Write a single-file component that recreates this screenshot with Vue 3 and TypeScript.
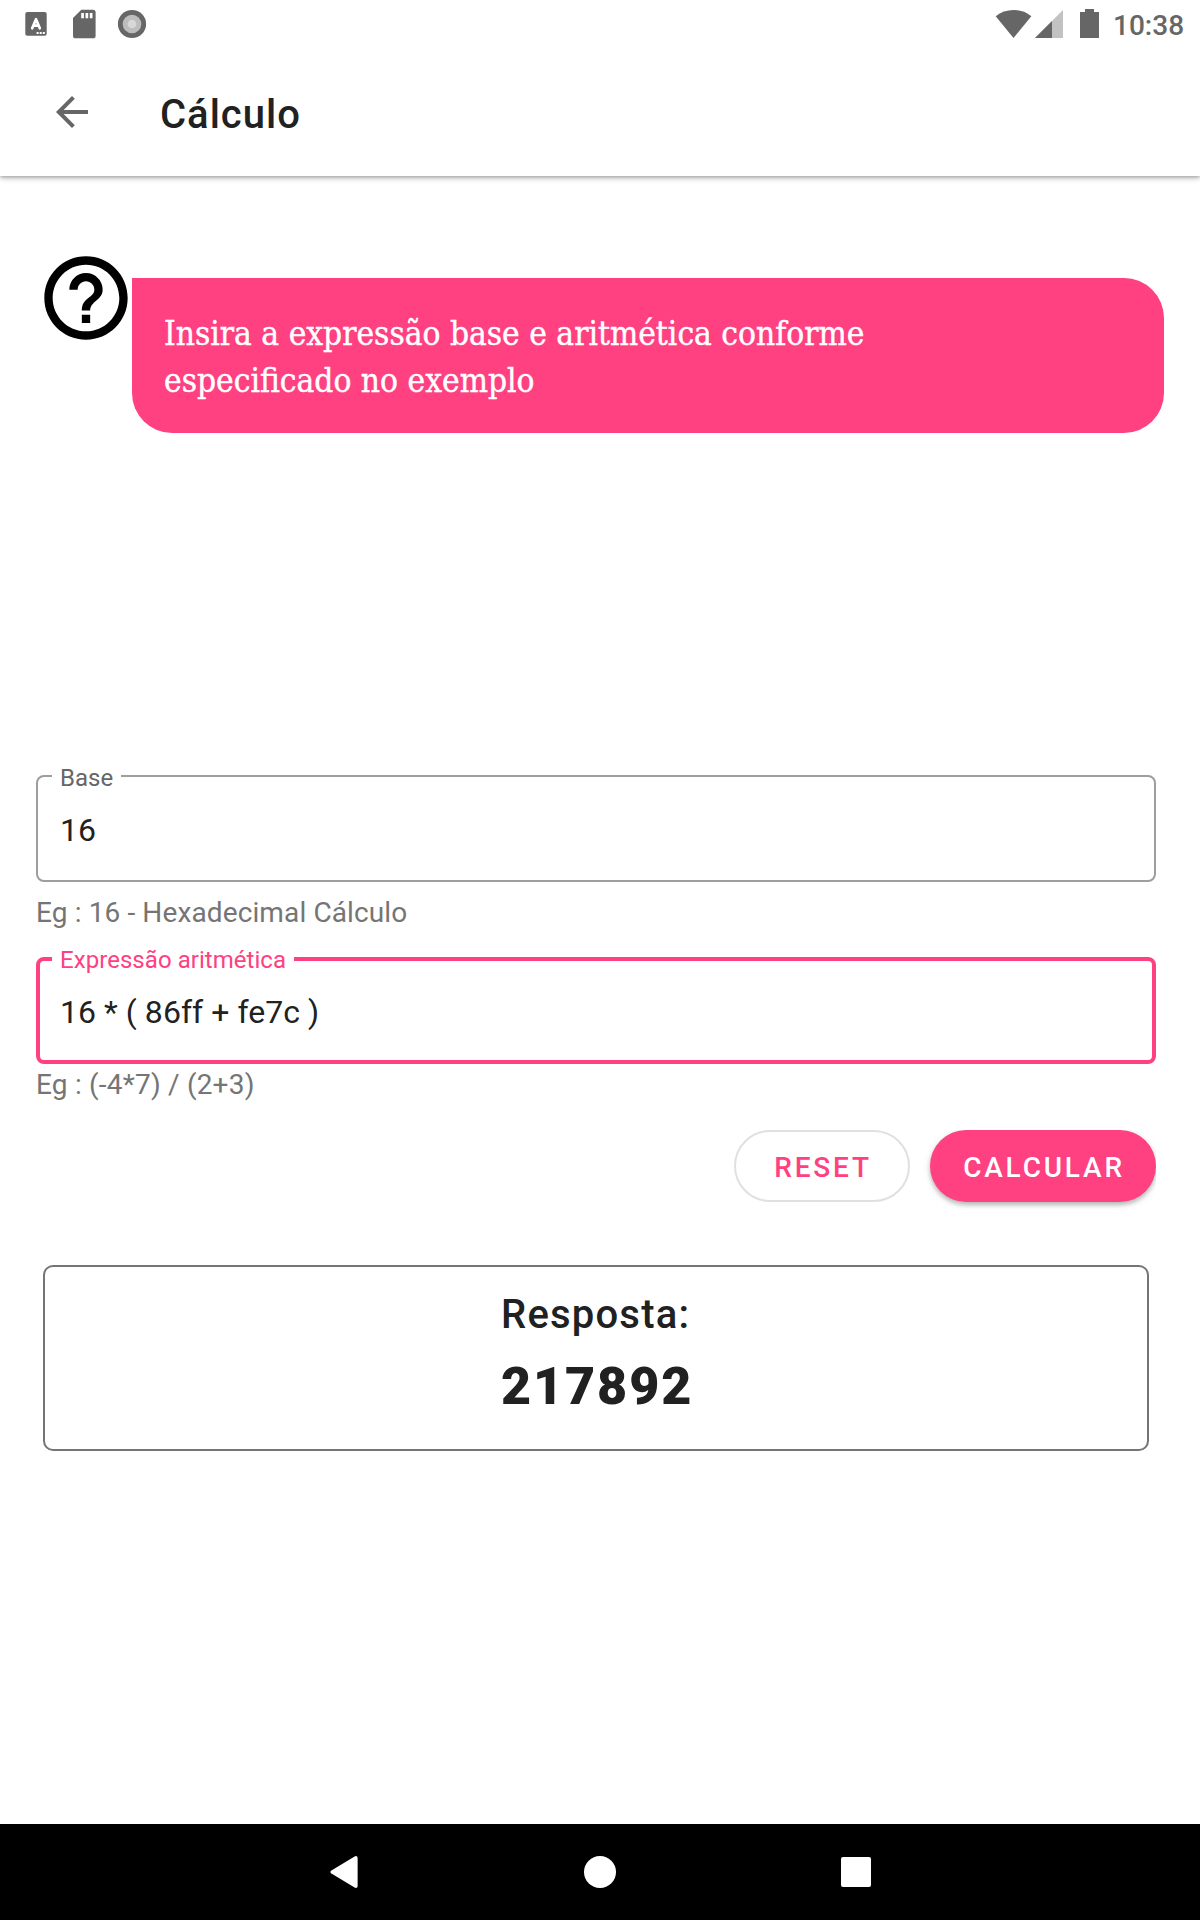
<script setup lang="ts">
interface Field {
  id: string
  label: string
  value: string
  hint: string
  focused: boolean
}

const fields: Field[] = [
  { id: 'base', label: 'Base', value: '16', hint: 'Eg : 16 - Hexadecimal Cálculo', focused: false },
  { id: 'expr', label: 'Expressão aritmética', value: '16 * ( 86ff + fe7c )', hint: 'Eg : (-4*7) / (2+3)', focused: true },
]
const tipLines: string[] = ['Insira a expressão base e aritmética conforme', 'especificado no exemplo']
const result = '217892'
</script>

<template>
  <div class="screen">
    <header class="top">
      <div class="status">
        <svg class="status-left" width="160" height="48" viewBox="0 0 160 48">
          <rect x="25.3" y="12" width="21.4" height="23.8" rx="2" fill="#666" />
          <path d="M32.2 28.3L36 19.2L39.8 28.3M33.6 25.6H38.4" fill="none" stroke="#fff" stroke-width="2.7" stroke-linecap="round" stroke-linejoin="round" />
          <path d="M36.6 32h2v2h-2zM39.7 32h2v2h-2zM42.8 32h2v2h-2z" fill="#fff" />
          <path d="M81.3 9.7H93a2.6 2.6 0 0 1 2.6 2.6V35.7a2.6 2.6 0 0 1-2.6 2.6H75.6A2.6 2.6 0 0 1 73 35.7V18z" fill="#666" />
          <path d="M81.2 13h2.7v5.3h-2.7zM85.5 13h2.7v5.3h-2.7zM89.8 13h2.7v5.3h-2.7z" fill="#fff" />
          <circle cx="132" cy="24" r="14.1" fill="#666" />
          <circle cx="132" cy="24" r="9.3" fill="#bdbdbd" />
          <circle cx="132" cy="24" r="4.3" fill="#d8d8d8" />
        </svg>
        <div class="status-right">
          <svg width="110" height="48" viewBox="992 0 110 48">
            <path d="M995.7 16.2Q1003.5 10 1013.5 10T1031.3 16.2L1013.5 38z" fill="#666" />
            <path d="M1063 10V38H1035z" fill="#c2c2c2" />
            <path d="M1052 21V38H1035z" fill="#666" />
            <path d="M1085 9h9v3h5v26h-19V12h5z" fill="#666" />
          </svg>
          <span class="clock">10:38</span>
        </div>
      </div>
      <div class="appbar">
        <svg class="back" width="48" height="48" viewBox="0 0 24 24">
          <path d="M20 11H7.83l5.59-5.59L12 4l-8 8 8 8 1.41-1.41L7.83 13H20v-2z" fill="#666" />
        </svg>
        <h1>Cálculo</h1>
      </div>
    </header>

    <main>
      <section class="tip">
        <svg class="help" width="100" height="100" viewBox="0 0 24 24">
          <path d="M11 18h2v-2h-2v2zm1-16C6.48 2 2 6.48 2 12s4.48 10 10 10 10-4.48 10-10S17.52 2 12 2zm0 18c-4.41 0-8-3.59-8-8s3.59-8 8-8 8 3.59 8 8-3.59 8-8 8zm0-14c-2.21 0-4 1.79-4 4h2c0-1.1.9-2 2-2s2 .9 2 2c0 2-3 1.75-3 5h2c0-2.25 3-2.5 3-5 0-2.21-1.79-4-4-4z" />
        </svg>
        <div class="bubble">
          <p v-for="line in tipLines" :key="line">{{ line }}</p>
        </div>
      </section>

      <section class="form">
        <div v-for="f in fields" :key="f.id" class="group" :class="{ focused: f.focused }">
          <div class="field">
            <span class="label">{{ f.label }}</span>
            <span class="value">{{ f.value }}</span>
          </div>
          <p class="hint">{{ f.hint }}</p>
        </div>
        <div class="actions">
          <button class="btn outline">RESET</button>
          <button class="btn solid">CALCULAR</button>
        </div>
      </section>

      <section class="result">
        <div class="answer">
          <span class="caption">Resposta:</span>
          <span class="number">{{ result }}</span>
        </div>
      </section>
    </main>

    <nav class="navbar">
      <svg width="32" height="32" viewBox="0 0 32 32"><path d="M3.4 14.5L26.6 .4Q29.6 -.6 29.6 2V30Q29.6 32.6 26.6 31.6L3.4 17.5Q1.4 16 3.4 14.5z" fill="#fff" /></svg>
      <svg width="32" height="32" viewBox="0 0 32 32"><circle cx="16" cy="16" r="16" fill="#fff" /></svg>
      <svg width="32" height="32" viewBox="0 0 32 32"><rect x="1" y="1" width="30" height="30" rx="2" fill="#fff" /></svg>
    </nav>
  </div>
</template>

<style>
body {
  margin: 0;
  background: #fff;
}
</style>

<style scoped>
.screen {
  width: 1200px;
  height: 1920px;
  display: flex;
  flex-direction: column;
  background: #fff;
  color: #212121;
  font-family: Roboto, sans-serif;
  overflow: hidden;
}
p,
h1 {
  margin: 0;
}
svg {
  display: block;
  flex: none;
}
.top {
  height: 176px;
  flex: none;
  box-shadow: 0 2px 6px rgba(0, 0, 0, 0.26), 0 1px 3px rgba(0, 0, 0, 0.2);
}
.status {
  height: 48px;
  display: flex;
  justify-content: space-between;
}
.status-right {
  display: flex;
  padding-right: 15px;
}
.clock {
  width: 72px;
  margin-left: 11px;
  line-height: 51px;
  font-size: 28px;
  font-weight: 500;
  color: #666;
  white-space: nowrap;
}
.appbar {
  height: 128px;
  display: flex;
  align-items: flex-start;
  padding-left: 48px;
}
.back {
  margin-top: 40px;
}
h1 {
  margin-left: 64px;
  font-size: 40px;
  font-weight: 500;
  line-height: 48px;
  padding-top: 43px;
  letter-spacing: 1px;
}
main {
  flex: 1;
}
.tip {
  display: flex;
  padding: 72px 36px 0;
}
.help {
  margin-right: -4px;
}
.bubble {
  flex: 1;
  box-sizing: border-box;
  height: 155px;
  margin-top: 30px;
  padding: 32px;
  border-radius: 0 40px 40px 40px;
  background: #ff4081;
  color: #fff;
  font-family: "DejaVu Serif Condensed", "DejaVu Serif", serif;
  font-size: 33px;
  line-height: 47px;
  white-space: nowrap;
}
.bubble p {
  transform: scaleX(1.005);
  transform-origin: left;
  -webkit-text-stroke: 0.4px #fff;
}
.form {
  width: 1120px;
  margin: 342px 0 0 36px;
}
.group {
  height: 182px;
}
.field {
  position: relative;
  box-sizing: border-box;
  height: 107px;
  padding-left: 22px;
  border: 2px solid #9e9e9e;
  border-radius: 8px;
}
.label {
  position: absolute;
  left: 14px;
  top: -13px;
  padding: 0 8px;
  background: #fff;
  font-size: 24px;
  line-height: 28px;
  color: #666;
}
.value {
  display: block;
  font-size: 32px;
  line-height: 106px;
}
.hint {
  margin-top: 13px;
  font-size: 28px;
  line-height: 36px;
  color: #757575;
  letter-spacing: 0.12px;
}
.focused {
  height: 173px;
}
.focused .field {
  padding-left: 20px;
  border: 4px solid #ff4081;
}
.focused .label {
  left: 12px;
  top: -15px;
  color: #ff4081;
  letter-spacing: 0.05px;
}
.focused .value {
  line-height: 102px;
  letter-spacing: 0.05px;
}
.focused .hint {
  margin-top: 3px;
  letter-spacing: 0.2px;
}
.actions {
  display: flex;
  justify-content: flex-end;
  gap: 20px;
  height: 92px;
  overflow: hidden;
}
.btn {
  box-sizing: border-box;
  height: 72px;
  padding: 3px 0 0 2px;
  border: 0;
  border-radius: 36px;
  font: 500 28px Roboto, sans-serif;
  letter-spacing: 2.8px;
}
.outline {
  width: 176px;
  border: 2px solid #e0e0e0;
  background: #fff;
  color: #ff4081;
}
.solid {
  width: 226px;
  background: #ff4081;
  color: #fff;
  box-shadow: 0 3px 4px rgba(0, 0, 0, 0.22), 0 2px 8px rgba(0, 0, 0, 0.1);
}
.result {
  box-sizing: border-box;
  width: 1106px;
  height: 186px;
  margin: 43px 0 0 43px;
  display: flex;
  justify-content: center;
  border: 2px solid #757575;
  border-radius: 10px;
}
.answer {
  display: flex;
  flex-direction: column;
  width: 190px;
}
.caption {
  margin-top: 24px;
  font-size: 40px;
  font-weight: 500;
  line-height: 48px;
  letter-spacing: 1.2px;
}
.number {
  margin-top: 18px;
  font-size: 52px;
  font-weight: 900;
  line-height: 60px;
  letter-spacing: 1.9px;
}
.navbar {
  height: 96px;
  flex: none;
  box-sizing: border-box;
  display: flex;
  gap: 224px;
  justify-content: center;
  align-items: center;
  background: #000;
}
</style>
